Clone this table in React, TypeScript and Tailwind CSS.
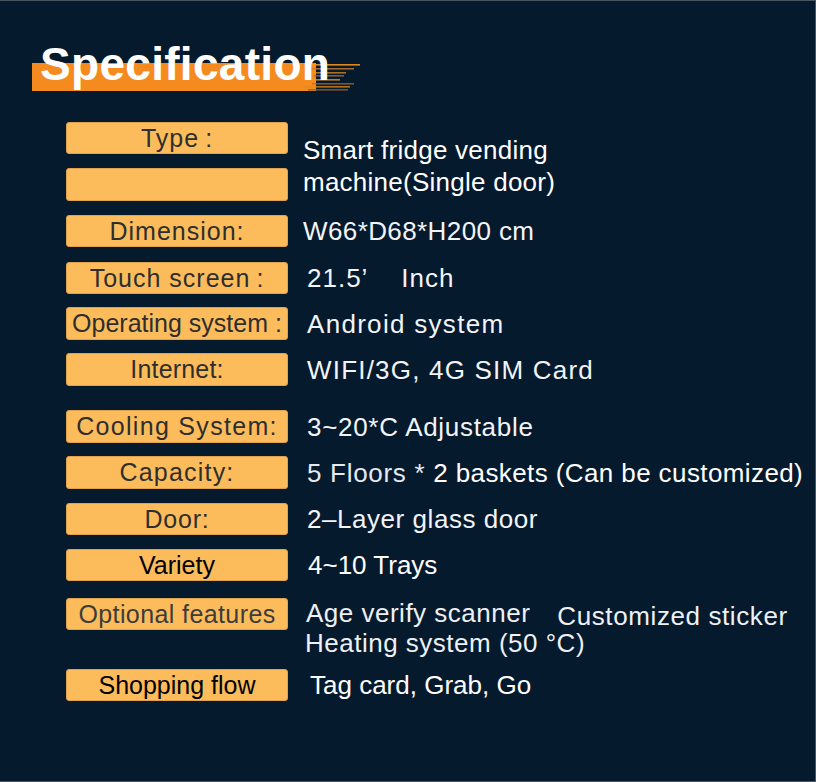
import React from 'react';

type Row = {
  label: string;
  colon?: number; // gap before a separate colon
  mt: number;
  h: number;
  gap: number;
  labelClass?: string;
  valueClass?: string;
  value: React.ReactNode;
};

const rows: Row[] = [
  { label: 'Dimension:', mt: 14, h: 32, gap: 15, value: 'W66*D68*H200 cm', valueClass: 'tracking-[0.4px]' },
  {
    label: 'Touch screen',
    colon: 6,
    mt: 15,
    h: 32,
    gap: 19,
    value: <>21.5’&nbsp;&nbsp;&nbsp;&nbsp;Inch</>,
    valueClass: 'tracking-[1px]',
  },
  {
    label: 'Operating system',
    colon: 7,
    mt: 13,
    h: 33,
    gap: 19,
    value: 'Android system',
    labelClass: 'tracking-normal',
    valueClass: 'tracking-[1.3px]',
  },
  { label: 'Internet:', mt: 13, h: 33, gap: 19, value: 'WIFI/3G, 4G SIM Card', labelClass: 'tracking-[0.2px]', valueClass: 'tracking-[1.2px]' },
  { label: 'Cooling System:', mt: 24, h: 33, gap: 19, value: '3~20*C Adjustable', labelClass: 'tracking-[1.3px]', valueClass: 'tracking-[0.7px]' },
  {
    label: 'Capacity:',
    mt: 13,
    h: 33,
    gap: 19,
    labelClass: 'tracking-[1.2px]',
    value: (
      <>
        <span className="tracking-[0.7px] text-[#e6e9ee]">5 Floors * </span>
        <span className="tracking-[0.4px] text-white">2 baskets (Can be customized)</span>
      </>
    ),
  },
  { label: 'Door:', mt: 14, h: 32, gap: 19, value: '2–Layer glass door', labelClass: 'tracking-[0.8px]', valueClass: 'tracking-[0.55px]' },
  {
    label: 'Variety',
    mt: 14,
    h: 32,
    gap: 20,
    value: '4~10 Trays',
    labelClass: 'text-black tracking-normal',
    valueClass: 'text-white',
  },
];

function LabelBox({
  text,
  h,
  colon,
  className = 'tracking-[1px]',
}: {
  text: string;
  h: number;
  colon?: number;
  className?: string;
}) {
  return (
    <div
      className={`flex w-[222px] shrink-0 items-center justify-center rounded-[3px] border border-[#e0a24c] bg-[#fcbc5c] text-[25px] text-[#2e2e2e] ${className}`}
      style={{ height: h }}
    >
      <span className="whitespace-nowrap leading-none">
        {text}
        {colon !== undefined && <span style={{ marginLeft: colon }}>:</span>}
      </span>
    </div>
  );
}

function Streaks() {
  const lines = [
    { x: 0, y: 2, w: 56, c: '#f7931e', o: 0.9 },
    { x: 6, y: 6, w: 44, c: '#c97a2b', o: 0.8 },
    { x: 2, y: 10, w: 40, c: '#f7931e', o: 0.7 },
    { x: 10, y: 13, w: 30, c: '#a8682a', o: 0.8 },
    { x: 0, y: 17, w: 36, c: '#f7931e', o: 0.8 },
    { x: 8, y: 21, w: 42, c: '#b56f2a', o: 0.7 },
    { x: 0, y: 24, w: 46, c: '#e0871f', o: 0.8 },
    { x: 4, y: 27, w: 40, c: '#9a5f28', o: 0.8 },
  ];
  return (
    <svg width="64" height="32" viewBox="0 0 64 32" className="absolute left-[304px] top-[61px]">
      {lines.map((l, i) => (
        <rect key={i} x={l.x} y={l.y} width={l.w} height={1.6} fill={l.c} opacity={l.o} />
      ))}
    </svg>
  );
}

export default function App() {
  return (
    <div
      className="relative h-[782px] w-[816px] overflow-hidden border-y border-r border-[#4a5562] bg-[#061a2e] text-white"
      style={{ fontFamily: '"Liberation Sans", Arial, "Noto Sans CJK SC", sans-serif' }}
    >
      {/* title with brush stroke */}
      <div className="absolute left-[32px] top-[62px] h-[28px] w-[284px] bg-[#f58b1f]" />
      <Streaks />
      <div className="relative pl-[40px] pt-[40px]">
        <h1 className="text-[46px] font-bold leading-[46px] tracking-[0.3px] text-white">Specification</h1>
      </div>

      <div className="mt-[35px] flex flex-col pl-[66px] text-[26px] text-[#f2f4f7]">
        {/* Type spans two boxes */}
        <div className="flex items-start">
          <div className="flex flex-col gap-[14px]">
            <LabelBox text="Type" colon={6} h={32} />
            <LabelBox text="" h={33} />
          </div>
          <div className="ml-[15px] pt-[12px] leading-[32px] tracking-[0.25px] text-white">
            <div>Smart fridge vending</div>
            <div>machine(Single door)</div>
          </div>
        </div>

        {rows.map((r) => (
          <div key={r.label} className="flex items-center" style={{ marginTop: r.mt }}>
            <LabelBox text={r.label} colon={r.colon} h={r.h} className={r.labelClass} />
            <div className={`whitespace-nowrap leading-none ${r.valueClass ?? ''}`} style={{ marginLeft: r.gap }}>
              {r.value}
            </div>
          </div>
        ))}

        {/* Optional features */}
        <div className="mt-[17px] flex items-start">
          <LabelBox text="Optional features" h={32} className="tracking-[0.4px] text-[#3c3c3c]" />
          <div className="ml-[18px] leading-[30px] text-[#eef0f3]">
            <div className="flex whitespace-nowrap">
              <span className="tracking-[0.5px]">Age verify scanner</span>
              <span className="relative top-[3px] ml-[27px] tracking-[0.6px]">Customized sticker</span>
            </div>
            <div className="-ml-px whitespace-nowrap tracking-[0.5px]">Heating system (50 °C)</div>
          </div>
        </div>

        <div className="mt-[11px] flex items-center">
          <LabelBox text="Shopping flow" h={32} className="text-black tracking-normal" />
          <div className="ml-[22px] whitespace-nowrap leading-none text-white">Tag card, Grab, Go</div>
        </div>
      </div>
    </div>
  );
}
